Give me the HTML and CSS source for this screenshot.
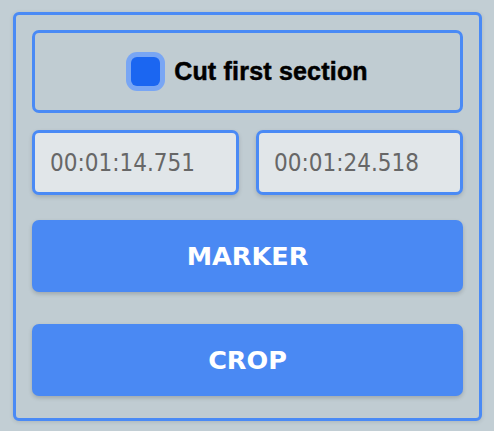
FILE: index.html
```html
<!DOCTYPE html>
<html>
<head>
<meta charset="utf-8">
<link rel="stylesheet" href="styles.css">
</head>
<body>
<div class="panel">
  <label class="toggle">
    <span class="check"></span>
    <span class="toggle-text">Cut first section</span>
  </label>
  <div class="times">
    <div class="time">00:01:14.751</div>
    <div class="time">00:01:24.518</div>
  </div>
  <button class="btn btn-marker">MARKER</button>
  <button class="btn btn-crop">CROP</button>
</div>
</body>
</html>
```
FILE: styles.css
```css
html, body {
  margin: 0;
  padding: 0;
  background: #c2ced4;
  width: 494px;
  height: 431px;
  overflow: hidden;
}
.panel {
  box-sizing: border-box;
  margin: 12px 0 0 13px;
  width: 469px;
  height: 409px;
  border: 3px solid #4a8af5;
  border-radius: 6px;
  background: #c0ccd2;
  box-shadow: 0 1px 4px rgba(0,0,0,0.12);
  padding: 15px 16px 0 16px;
  display: flex;
  flex-direction: column;
}
.toggle {
  box-sizing: border-box;
  height: 83px;
  border: 3px solid #4a8af5;
  border-radius: 7px;
  display: flex;
  align-items: center;
  justify-content: center;
  gap: 14px;
}
.check {
  width: 29px;
  height: 29px;
  border-radius: 6px;
  background: #1b66f1;
  box-shadow: 0 0 0 5px #79a6f4;
  margin-left: 4px;
}
.toggle-text {
  font-family: "Liberation Sans", Arial, sans-serif;
  font-weight: bold;
  font-size: 25px;
  color: #000;
  letter-spacing: 0.2px;
  -webkit-text-stroke: 0.5px #000;
}
.times {
  margin-top: 17px;
  display: flex;
  gap: 17px;
}
.time {
  box-sizing: border-box;
  flex: 1;
  height: 65px;
  background: #e1e6e9;
  border: 3px solid #4a8af5;
  border-radius: 7px;
  box-shadow: 0 2px 4px rgba(0,0,0,0.15);
  display: flex;
  align-items: center;
  padding-left: 15px;
  font-family: "DejaVu Sans Condensed", "DejaVu Sans", sans-serif;
  font-size: 24px;
  color: #676767;
}
.btn {
  display: block;
  height: 72px;
  border: none;
  border-radius: 7px;
  background: #4a89f3;
  color: #fff;
  font-family: "DejaVu Sans", sans-serif;
  font-weight: bold;
  font-size: 25.5px;
  box-shadow: 0 2px 4px rgba(0,0,0,0.18);
  padding: 0;
}
.btn-marker {
  margin-top: 25px;
}
.btn-crop {
  margin-top: 32px;
}
```
